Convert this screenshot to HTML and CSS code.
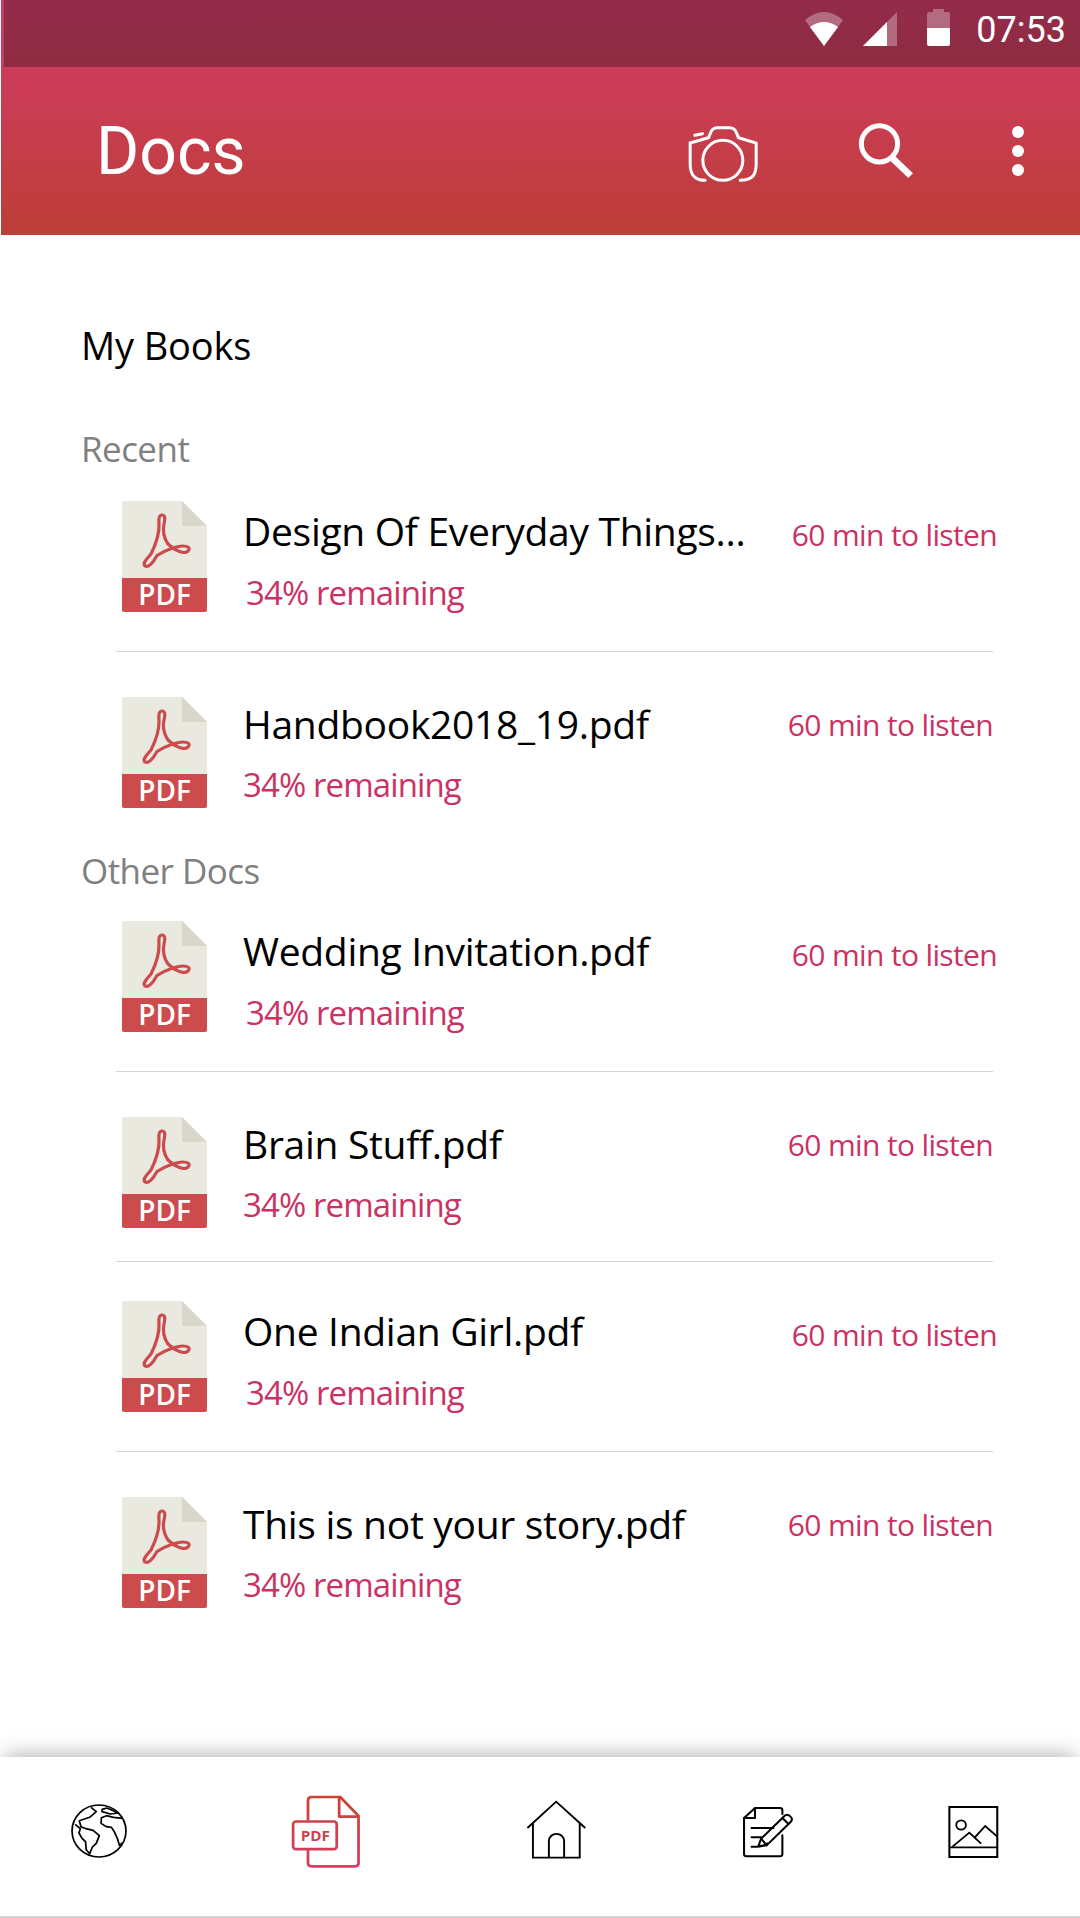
FILE: index.html
```html
<!DOCTYPE html>
<html lang="en">
<head>
    <meta charset="UTF-8">
    <meta name="viewport" content="width=device-width, initial-scale=1.0">
    <title>Docs</title>
    <link rel="stylesheet" href="styles.css">
</head>
<body>
    <svg class="defs" width="0" height="0">
        <symbol id="pdf-file" viewBox="0 0 85 111">
            <path d="M2 0H60L85 25V109a2 2 0 0 1-2 2H2a2 2 0 0 1-2-2V2a2 2 0 0 1 2-2Z" fill="#e9e9e0"/>
            <path d="M60 0L85 25H60Z" fill="#d9d7ca"/>
            <path d="M0 77H85V109a2 2 0 0 1-2 2H2a2 2 0 0 1-2-2Z" fill="#cc4b4c"/>
            <path d="M40 14C37 14 36.500 18 37 23C37.500 33 33 45 29 53C25 58 20 62 23 65C26 67 31 62 35 54.500C43 49 55 45 61 45C66 45 69 47 66 50C62 54 52 49 46 43C42 37 40.500 30 42 23C43.500 17 43 14 40 14Z" fill="none" stroke="#cc4b4c" stroke-width="3.200"/>
        </symbol>
    </svg>

    <div class="statusbar">
        <svg class="st-wifi" width="38" height="34" viewBox="0 0 38 34"><path d="M0 8Q19-8 38 8L19 34Z" fill="#fff" fill-opacity=".3"/><path d="M5 15Q19 5 33 15L19 34Z" fill="#fff"/></svg>
        <svg class="st-signal" width="34" height="34" viewBox="0 0 34 34"><path d="M0 34L34 0V34Z" fill="#fff" fill-opacity=".3"/><path d="M0 34L24 10V34Z" fill="#fff"/></svg>
        <svg class="st-battery" width="23" height="37" viewBox="0 0 23 37"><path d="M6 3V0H17V3H21a2 2 0 0 1 2 2V19H0V5a2 2 0 0 1 2-2Z" fill="#fff" fill-opacity=".3"/><path d="M0 19H23V35a2 2 0 0 1-2 2H2a2 2 0 0 1-2-2Z" fill="#fff"/></svg>
        <span class="clock">07:53</span>
    </div>

    <header class="appbar">
        <h1 class="appbar-title">Docs</h1>
        <svg class="ic-camera" width="71" height="58" viewBox="84 374 212 174" fill="none" stroke="#fff" stroke-width="9" stroke-linecap="round">
            <path d="M135 540C100 540 90 520 90 490V428L145 412C152 395 155 382 170 382H210C225 382 228 395 235 412L288 428V490C288 520 280 540 240 540"/>
            <circle cx="188" cy="480" r="60"/>
            <path d="M104 405L127 400"/>
        </svg>
        <svg class="ic-search" width="57" height="57" viewBox="590 366 170 170" fill="none" stroke="#fff">
            <circle cx="657" cy="431" r="54" stroke-width="15"/>
            <path d="M697 475L750 526" stroke-width="20"/>
        </svg>
        <div class="dots"><i></i><i></i><i></i></div>
    </header>

    <main class="content">
        <h2 class="page-title">My Books</h2>

        <h3 class="section recent">Recent</h3>
        <div class="row odd">
            <svg class="file" width="85" height="111" viewBox="0 0 85 111"><use href="#pdf-file"/><text x="42.500" y="104" class="file-label">PDF</text></svg>
            <div class="info">
                <div class="name">Design Of Everyday Things...</div>
                <div class="left">34% remaining</div>
            </div>
            <div class="listen">60 min to listen</div>
        </div>
        <div class="divider"></div>
        <div class="row">
            <svg class="file" width="85" height="111" viewBox="0 0 85 111"><use href="#pdf-file"/><text x="42.500" y="104" class="file-label">PDF</text></svg>
            <div class="info">
                <div class="name">Handbook2018_19.pdf</div>
                <div class="left">34% remaining</div>
            </div>
            <div class="listen">60 min to listen</div>
        </div>

        <h3 class="section other">Other Docs</h3>
        <div class="row odd">
            <svg class="file" width="85" height="111" viewBox="0 0 85 111"><use href="#pdf-file"/><text x="42.500" y="104" class="file-label">PDF</text></svg>
            <div class="info">
                <div class="name">Wedding Invitation.pdf</div>
                <div class="left">34% remaining</div>
            </div>
            <div class="listen">60 min to listen</div>
        </div>
        <div class="divider"></div>
        <div class="row">
            <svg class="file" width="85" height="111" viewBox="0 0 85 111"><use href="#pdf-file"/><text x="42.500" y="104" class="file-label">PDF</text></svg>
            <div class="info">
                <div class="name">Brain Stuff.pdf</div>
                <div class="left">34% remaining</div>
            </div>
            <div class="listen">60 min to listen</div>
        </div>
        <div class="divider tight"></div>
        <div class="row odd">
            <svg class="file" width="85" height="111" viewBox="0 0 85 111"><use href="#pdf-file"/><text x="42.500" y="104" class="file-label">PDF</text></svg>
            <div class="info">
                <div class="name">One Indian Girl.pdf</div>
                <div class="left">34% remaining</div>
            </div>
            <div class="listen">60 min to listen</div>
        </div>
        <div class="divider"></div>
        <div class="row">
            <svg class="file" width="85" height="111" viewBox="0 0 85 111"><use href="#pdf-file"/><text x="42.500" y="104" class="file-label">PDF</text></svg>
            <div class="info">
                <div class="name">This is not your story.pdf</div>
                <div class="left">34% remaining</div>
            </div>
            <div class="listen">60 min to listen</div>
        </div>
    </main>

    <nav class="tabbar">
        <svg class="tab tab-globe" width="56" height="56" viewBox="208 220 162 168" preserveAspectRatio="none" fill="none" stroke="#000" stroke-width="5" stroke-linejoin="round">
            <circle cx="289" cy="304" r="78"/>
            <path d="M220 284L235 297L231 310L240 326L250 336L252 360L262 372L270 352L281 341L290 318L272 302L251 297L237 291L232 273L262 263L281 246L266 233"/>
            <path d="M358 266L331 263L311 258L296 264L295 281L310 291L325 293L333 306L342 326L348 347L356 340"/>
            <path d="M298 239L312 235L345 250L322 253L298 246Z"/>
        </svg>
        <svg class="tab tab-pdf" width="72" height="75" viewBox="840 192 208 226" preserveAspectRatio="none" fill="none">
            <defs>
                <linearGradient id="tab-red" gradientUnits="userSpaceOnUse" x1="0" y1="198" x2="0" y2="412">
                    <stop offset="0" stop-color="#cb4233"/>
                    <stop offset="1" stop-color="#d23f68"/>
                </linearGradient>
            </defs>
            <g stroke="url(#tab-red)" stroke-width="8" stroke-linejoin="round">
                <path d="M892 272V212Q892 201 903 201H985L1038 258V400Q1038 410 1028 410H903Q892 410 892 400V358"/>
                <path d="M982 201V260H1038"/>
                <rect x="849" y="275" width="126" height="83" rx="8"/>
            </g>
            <text x="913" y="333" class="tab-pdf-label" fill="url(#tab-red)">PDF</text>
        </svg>
        <svg class="tab tab-home" width="61" height="60" viewBox="-42 208 176 180" preserveAspectRatio="none" fill="none" stroke="#000" stroke-width="5.500">
            <path d="M-38 292L45 213L129 292"/>
            <path d="M-22 276V381H113V276"/>
            <path d="M24 381V332C24 302 68 302 68 332V381"/>
        </svg>
        <svg class="tab tab-note" width="52" height="52" viewBox="584 228 152 156" preserveAspectRatio="none" fill="none" stroke="#000" stroke-width="6" stroke-linejoin="round" stroke-linecap="round">
            <path d="M702 252V241Q702 234 695 234H622L590 264V372Q590 379 597 379H695Q702 379 702 372V316"/>
            <path d="M590 264H622V234"/>
            <path d="M612 294H676M612 322H640M612 350H630C640 350 650 348 658 340"/>
            <path d="M632 348L640 326L708 258Q716 250 726 260Q734 268 726 276L656 346Z"/>
            <path d="M640 326L656 346M702 264L720 282"/>
        </svg>
        <svg class="tab tab-image" width="51" height="52" viewBox="1184 230 148 156" preserveAspectRatio="none" fill="none" stroke="#000" stroke-width="5.500">
            <rect x="1188" y="233" width="139" height="150" stroke-width="6"/>
            <path d="M1188 354H1327"/>
            <circle cx="1222" cy="287" r="14"/>
            <path d="M1197 352L1246 310L1280 343M1262 324L1292 290L1327 322"/>
        </svg>
    </nav>
</body>
</html>
```

FILE: styles.css
```css
* { box-sizing: border-box; }
html, body { margin: 0; padding: 0; }
body { width: 1080px; height: 1918px; display: flex; flex-direction: column; background-color: #fff; font-family: "Open Sans", sans-serif; overflow: hidden; }
.defs { position: absolute; }

.statusbar { height: 67px; margin-left: 1px; border-left: 3px solid #cc3a62; padding: 0 14px 0 0; display: flex; justify-content: flex-end; align-items: flex-start; background: linear-gradient(#932b4b, #8f2c41); color: #fff; }
.statusbar svg { display: block; }
.st-wifi { margin-top: 12px; }
.st-signal { margin: 12px 0 0 20px; }
.st-battery { margin: 9px 0 0 30px; }
.clock { margin: 8px 0 0 26px; font: 36px/44px Roboto, sans-serif; }

.appbar { height: 168px; margin-left: 1px; padding-left: 95px; display: flex; align-items: flex-start; background: linear-gradient(#cd3c5b, #bd3e37); color: #fff; }
.appbar-title { flex: 1; margin: 0; padding-top: 56px; font: 400 66px/58px Roboto, sans-serif; }
.ic-camera { margin: 58px 98px 0 0; }
.ic-search { margin: 55px 98px 0 0; }
.dots { width: 12px; margin: 59px 56px 0 0; display: flex; flex-direction: column; gap: 7px; }
.dots i { width: 12px; height: 12px; border-radius: 50%; background-color: #fff; }

.content { flex: 1; padding-top: 85px; }
.page-title { margin: 0 0 59px 81px; font-size: 38px; font-weight: 400; line-height: 50px; letter-spacing: -0.15px; color: #000; }
.section { margin: 0 0 0 81px; font-size: 35px; font-weight: 400; line-height: 40px; letter-spacing: -0.55px; color: #808080; }
.section.recent { margin-bottom: 32px; }
.section.other { margin-top: 43px; margin-bottom: 30px; }

.row { display: flex; height: 111px; padding: 0 87px 0 122px; }
.file { flex: none; display: block; }
.file-label { font: 600 28px "Open Sans", sans-serif; text-anchor: middle; fill: #fff; }
.info { flex: 1; padding-left: 36px; }
.name { margin-top: 2px; font-size: 39px; line-height: 50px; letter-spacing: -0.3px; color: #000; white-space: nowrap; }
.left { margin-top: 16px; font-size: 33px; line-height: 40px; letter-spacing: -0.9px; color: #cb3263; }
.listen { margin-top: 8px; font-size: 30px; line-height: 40px; letter-spacing: -0.65px; color: #cb3263; white-space: nowrap; }
.row.odd { padding-right: 83px; }
.row.odd .name { margin-top: 5px; }
.row.odd .left { margin-top: 17px; margin-left: 3px; }
.row.odd .listen { margin-top: 14px; }

.divider { height: 1px; margin: 39px 87px 45px 116px; background-color: #d4d4d4; }
.divider.tight { margin-top: 33px; margin-bottom: 39px; }

.tabbar { height: 161px; display: flex; align-items: flex-start; background-color: #fff; border-bottom: 2px solid #d4d4d4; box-shadow: 0 -6px 20px -4px rgba(0, 0, 0, .3); }
.tab { display: block; flex: none; }
.tab-globe { margin: 46px 0 0 71px; }
.tab-pdf { margin: 37px 0 0 163px; }
.tab-pdf-label { font: 700 44px "Open Sans", sans-serif; text-anchor: middle; }
.tab-home { margin: 43px 0 0 164px; }
.tab-note { margin: 49px 0 0 155px; }
.tab-image { margin: 49px 0 0 154px; }
```
